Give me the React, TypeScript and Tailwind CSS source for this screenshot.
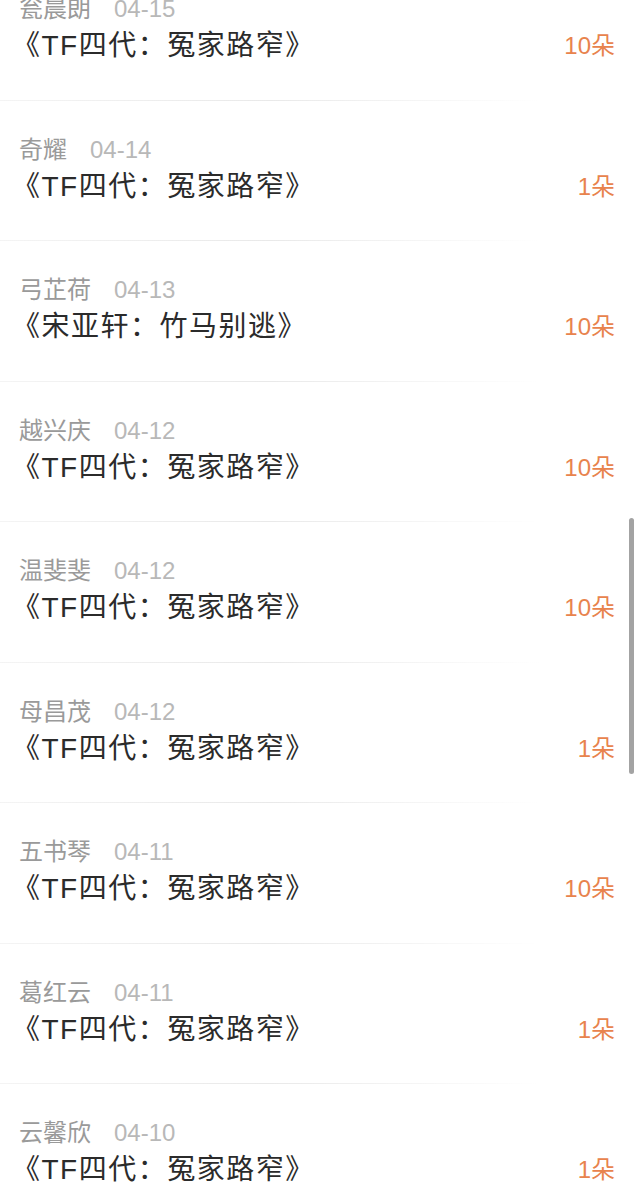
const rows = [
  { name: "瓮晨朗", date: "04-15", title: "《TF四代：冤家路窄》", amount: "10朵" },
  { name: "奇耀", date: "04-14", title: "《TF四代：冤家路窄》", amount: "1朵" },
  { name: "弓芷荷", date: "04-13", title: "《宋亚轩：竹马别逃》", amount: "10朵" },
  { name: "越兴庆", date: "04-12", title: "《TF四代：冤家路窄》", amount: "10朵" },
  { name: "温斐斐", date: "04-12", title: "《TF四代：冤家路窄》", amount: "10朵" },
  { name: "母昌茂", date: "04-12", title: "《TF四代：冤家路窄》", amount: "1朵" },
  { name: "五书琴", date: "04-11", title: "《TF四代：冤家路窄》", amount: "10朵" },
  { name: "葛红云", date: "04-11", title: "《TF四代：冤家路窄》", amount: "1朵" },
  { name: "云馨欣", date: "04-10", title: "《TF四代：冤家路窄》", amount: "1朵" },
];

function GiftRow({ name, date, title, amount }: (typeof rows)[number]) {
  return (
    <div className="h-[140.5px] flex flex-col">
      <div className="flex-1 pt-[34px] pl-[19px] pr-[25px]">
        <div className="flex items-center h-[30px] text-[24px]">
          <span className="text-[#9a9a9a]">{name}</span>
          <span className="ml-[23px] text-[#b8b8b8]">{date}</span>
        </div>
        <div className="flex items-center justify-between h-[36px] mt-[4px]">
          <span className="text-[28px] tracking-[1.5px] text-[#2b2b2b] -ml-[7px]">{title}</span>
          <span className="text-[24px] text-[#e8834d]">{amount}</span>
        </div>
      </div>
      <div className="h-px w-[540px] bg-gradient-to-r from-[#f4f4f4] via-[#e9e9e9] to-transparent" />
    </div>
  );
}

export default function App() {
  return (
    <div
      className="relative w-[640px] h-[1203px] overflow-hidden bg-white"
      style={{ fontFamily: '"Liberation Sans", "Noto Sans CJK SC", sans-serif' }}
    >
      <div className="-mt-[40px]">
        {rows.map((r, i) => (
          <GiftRow key={i} {...r} />
        ))}
      </div>
      <div className="absolute right-[6px] top-[518px] w-[5px] h-[256px] rounded-full bg-[#a3a3a3]" />
    </div>
  );
}
